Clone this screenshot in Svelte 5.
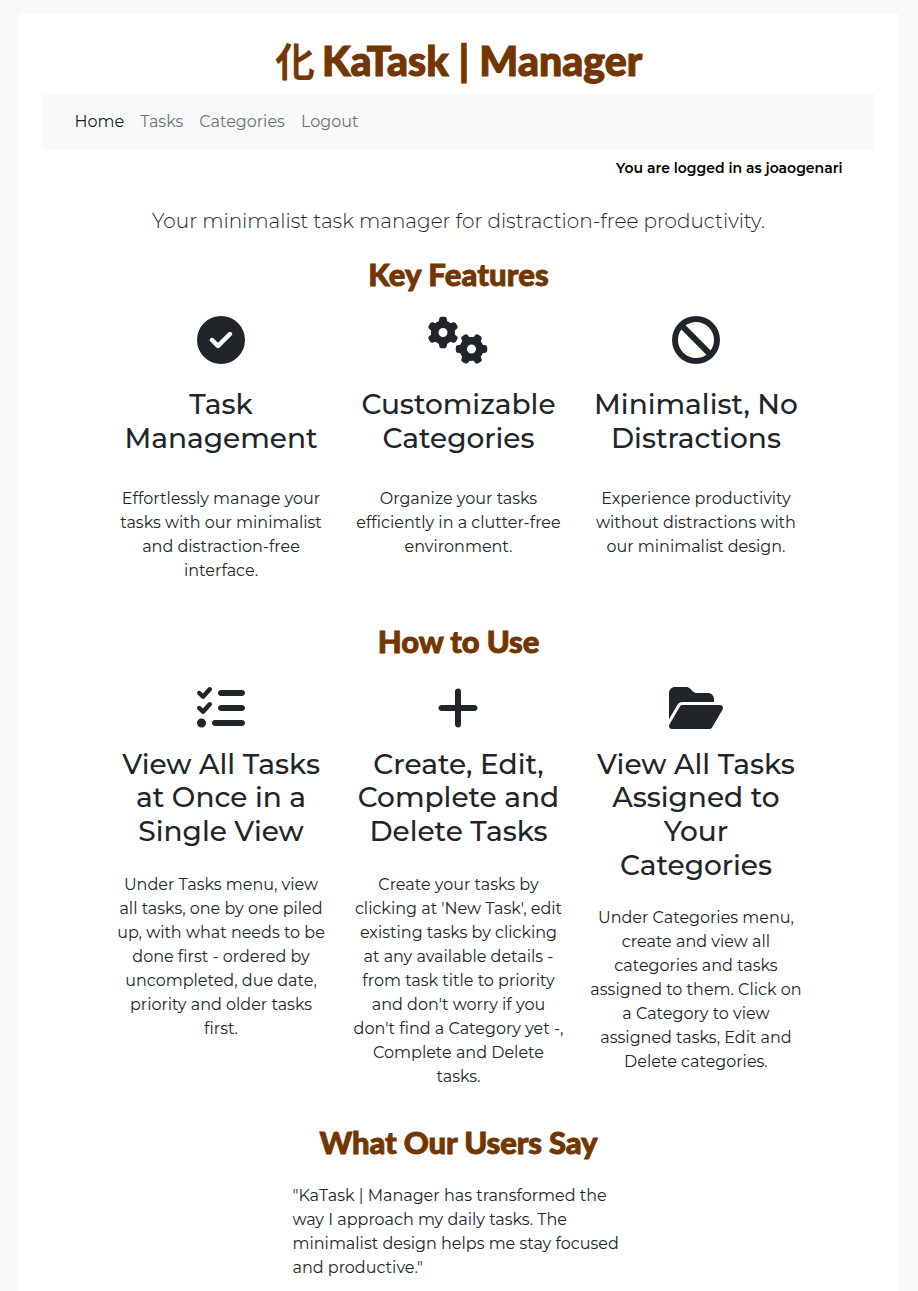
<script>
  const nav = ['Home', 'Tasks', 'Categories', 'Logout'];

  const icons = {
    check: { w: 512, d: 'M256 512A256 256 0 1 0 256 0a256 256 0 1 0 0 512zM369 209L241 337c-9.400 9.400-24.600 9.400-33.900 0l-64-64c-9.400-9.400-9.400-24.600 0-33.900s24.600-9.400 33.900 0l47 47L335 175c9.400-9.400 24.600-9.400 33.900 0s9.400 24.600 0 33.900z' },
    gears: { w: 640, d: 'M308.500 135.300c7.100-6.300 9.900-16.200 6.200-25c-2.300-5.300-4.800-10.500-7.600-15.500L304 89.400c-3-5-6.300-9.900-9.800-14.600c-5.700-7.600-15.700-10.100-24.700-7.100l-28.200 9.300c-10.700-8.800-23-16-36.200-20.900L199 27.100c-1.900-9.300-9.100-16.700-18.500-17.800C173.900 8.400 167.200 8 160.400 8h-.7c-6.800 0-13.500 .4-20.100 1.200c-9.400 1.100-16.600 8.600-18.500 17.800L115 56.100c-13.300 5-25.500 12.100-36.200 20.900L50.500 67.800c-9-3-19-.5-24.700 7.100c-3.500 4.700-6.800 9.600-9.900 14.600l-3 5.300c-2.800 5-5.300 10.200-7.600 15.600c-3.700 8.700-.9 18.600 6.200 25l22.200 19.800C32.600 161.900 32 168.900 32 176s.6 14.100 1.700 20.900L11.500 216.700c-7.100 6.300-9.900 16.200-6.200 25c2.300 5.300 4.800 10.500 7.600 15.600l3 5.200c3 5.100 6.300 9.900 9.900 14.600c5.700 7.600 15.700 10.100 24.700 7.100l28.200-9.300c10.700 8.800 23 16 36.200 20.900l6.100 29.100c1.900 9.300 9.100 16.700 18.500 17.800c6.700 .8 13.500 1.200 20.400 1.200s13.700-.4 20.400-1.200c9.400-1.100 16.600-8.600 18.500-17.800l6.100-29.100c13.300-5 25.500-12.100 36.200-20.900l28.200 9.300c9 3 19 .5 24.700-7.100c3.500-4.700 6.800-9.500 9.800-14.600l3.100-5.400c2.800-5 5.300-10.200 7.600-15.500c3.700-8.700 .9-18.600-6.200-25l-22.200-19.800c1.100-6.800 1.700-13.800 1.700-20.900s-.6-14.100-1.700-20.900l22.200-19.800zM112 176a48 48 0 1 1 96 0 48 48 0 1 1-96 0zM504.700 500.500c6.300 7.100 16.200 9.900 25 6.200c5.300-2.300 10.500-4.800 15.500-7.600l5.400-3.100c5-3 9.900-6.300 14.600-9.800c7.600-5.700 10.100-15.700 7.100-24.700l-9.300-28.200c8.800-10.700 16-23 20.900-36.200l29.100-6.100c9.300-1.900 16.700-9.100 17.800-18.500c.8-6.700 1.200-13.500 1.200-20.400s-.4-13.700-1.200-20.400c-1.100-9.400-8.600-16.600-17.800-18.500L583.900 307c-5-13.300-12.100-25.500-20.900-36.200l9.300-28.200c3-9 .5-19-7.100-24.700c-4.700-3.500-9.600-6.800-14.600-9.900l-5.300-3c-5-2.800-10.200-5.300-15.600-7.600c-8.700-3.700-18.600-.9-25 6.200l-19.800 22.200c-6.800-1.100-13.800-1.700-20.900-1.700s-14.100 .6-20.900 1.700l-19.800-22.200c-6.300-7.100-16.200-9.900-25-6.200c-5.300 2.300-10.500 4.800-15.600 7.600l-5.200 3c-5.100 3-9.900 6.300-14.600 9.900c-7.600 5.700-10.100 15.700-7.100 24.700l9.300 28.200c-8.800 10.700-16 23-20.900 36.200L315.100 313c-9.300 1.900-16.700 9.100-17.800 18.500c-.8 6.700-1.200 13.500-1.200 20.400s.4 13.700 1.200 20.400c1.100 9.400 8.600 16.600 17.800 18.500l29.100 6.100c5 13.300 12.100 25.500 20.900 36.200l-9.300 28.200c-3 9-.5 19 7.100 24.700c4.700 3.500 9.500 6.800 14.600 9.800l5.400 3.100c5 2.800 10.200 5.300 15.500 7.600c8.700 3.700 18.600 .9 25-6.200l19.800-22.200c6.800 1.100 13.800 1.700 20.900 1.700s14.100-.6 20.900-1.700l19.800 22.200zM464 304a48 48 0 1 1 0 96 48 48 0 1 1 0-96z' },
    ban: { w: 512, d: 'M367.200 412.500L99.500 144.800C77.100 176.100 64 214.500 64 256c0 106 86 192 192 192c41.500 0 79.900-13.100 111.200-35.500zm45.300-45.300C434.900 335.900 448 297.500 448 256c0-106-86-192-192-192c-41.500 0-79.900 13.100-111.200 35.500L412.500 367.200zM0 256a256 256 0 1 1 512 0A256 256 0 1 1 0 256z' },
    list: { w: 512, d: 'M152.100 38.200c9.900 8.900 10.700 24 1.800 33.900l-72 80c-4.400 4.900-10.600 7.800-17.200 7.900s-12.900-2.400-17.600-7L7 113C-2.300 103.600-2.300 88.400 7 79s24.600-9.400 33.900 0l22.100 22.100 55.100-61.200c8.900-9.900 24-10.700 33.900-1.800zm0 160c9.900 8.900 10.700 24 1.800 33.900l-72 80c-4.400 4.900-10.600 7.800-17.200 7.900s-12.900-2.400-17.600-7L7 273c-9.400-9.400-9.400-24.600 0-33.900s24.600-9.400 33.900 0l22.100 22.100 55.100-61.200c8.900-9.900 24-10.700 33.900-1.800zM224 96c0-17.700 14.300-32 32-32H480c17.700 0 32 14.300 32 32s-14.300 32-32 32H256c-17.700 0-32-14.300-32-32zm0 160c0-17.700 14.300-32 32-32H480c17.700 0 32 14.300 32 32s-14.300 32-32 32H256c-17.700 0-32-14.300-32-32zM160 416c0-17.700 14.300-32 32-32H480c17.700 0 32 14.300 32 32s-14.300 32-32 32H192c-17.700 0-32-14.300-32-32zM48 368a48 48 0 1 1 0 96 48 48 0 1 1 0-96z' },
    plus: { w: 448, d: 'M256 80c0-17.700-14.300-32-32-32s-32 14.300-32 32V224H48c-17.700 0-32 14.300-32 32s14.300 32 32 32H192V432c0 17.700 14.300 32 32 32s32-14.300 32-32V288H400c17.700 0 32-14.300 32-32s-14.300-32-32-32H256V80z' },
    folder: { w: 576, d: 'M88.700 223.800L0 375.800V96C0 60.700 28.700 32 64 32H181.500c17 0 33.300 6.700 45.300 18.700l26.500 26.500c12 12 28.300 18.700 45.300 18.700H416c35.300 0 64 28.700 64 64v32H144c-22.800 0-43.800 12.100-55.300 31.800zm27.600 16.100C122.100 230 132.600 224 144 224H544c11.500 0 22 6.100 27.700 16.100s5.700 22.200-.1 32.100l-112 192C453.900 474 443.400 480 432 480H32c-11.500 0-22-6.100-27.700-16.100s-5.700-22.200 .1-32.100l112-192z' }
  };

  const features = [
    { icon: 'check', title: 'Task Management', body: 'Effortlessly manage your tasks with our minimalist and distraction-free interface.' },
    { icon: 'gears', title: 'Customizable Categories', body: 'Organize your tasks efficiently in a clutter-free environment.' },
    { icon: 'ban', title: 'Minimalist, No Distractions', body: 'Experience productivity without distractions with our minimalist design.' }
  ];

  const steps = [
    { icon: 'list', title: 'View All Tasks at Once in a Single View', body: 'Under Tasks menu, view all tasks, one by one piled up, with what needs to be done first - ordered by uncompleted, due date, priority and older tasks first.' },
    { icon: 'plus', title: 'Create, Edit, Complete and Delete Tasks', body: "Create your tasks by clicking at 'New Task', edit existing tasks by clicking at any available details - from task title to priority and don't worry if you don't find a Category yet -, Complete and Delete tasks." },
    { icon: 'folder', title: 'View All Tasks Assigned to Your Categories', body: 'Under Categories menu, create and view all categories and tasks assigned to them. Click on a Category to view assigned tasks, Edit and Delete categories.' }
  ];
</script>

{#snippet cards(list)}
  <div class="row">
    {#each list as item}
      <article>
        <svg viewBox="0 0 {icons[item.icon].w} 512" width={icons[item.icon].w * 0.09375} height="48" aria-hidden="true"><path d={icons[item.icon].d} /></svg>
        <h3>{item.title}</h3>
        <p>{item.body}</p>
      </article>
    {/each}
  </div>
{/snippet}

<div class="page">
  <h1><span class="kanji">化</span> KaTask | Manager</h1>
  <nav>
    {#each nav as label, i}
      <a href="#top" class:active={i === 0}>{label}</a>
    {/each}
  </nav>
  <div class="user">You are logged in as joaogenari</div>
  <p class="lead">Your minimalist task manager for distraction-free productivity.</p>

  <section class="features">
    <h2 class="wide">Key Features</h2>
    {@render cards(features)}
  </section>
  <section class="steps">
    <h2>How to Use</h2>
    {@render cards(steps)}
  </section>
  <section class="say">
    <h2>What Our Users Say</h2>
    <blockquote>"KaTask | Manager has transformed the way I approach my daily tasks. The minimalist design helps me stay focused and productive."</blockquote>
  </section>
</div>

<style>
  :global(body) { background: #f8f9fb; overflow: hidden; }
  .page {
    box-sizing: border-box;
    width: 880px;
    height: 1320px;
    margin: 13px 0 0 19px;
    padding: 24px;
    border-radius: 4px;
    background: #fff;
    color: #212529;
    font: 400 16px/24px Montserrat, Inter, sans-serif;
  }
  h1, h2, h3, p, blockquote { margin: 0; }
  h1, h2 { color: #733600; font-family: Lato, "Noto Sans CJK JP", sans-serif; font-weight: 900; text-align: center; }
  h1 { height: 57px; font-size: 41px; line-height: 47px; letter-spacing: 0.07px; white-space: nowrap; -webkit-text-stroke: 1.1px #733600; }
  .kanji { font-family: "Noto Sans CJK JP", sans-serif; font-size: 39px; font-weight: 500; line-height: 1; margin-right: -2.500px; -webkit-text-stroke-width: 0.9px; }
  h2 { font-size: 31px; line-height: 36px; height: 38px; letter-spacing: -0.12px; -webkit-text-stroke: 0.9px #733600; }
  h2.wide { letter-spacing: 0.15px; }
  nav { display: flex; gap: 16px; height: 56px; box-sizing: border-box; padding-left: 31.5px; align-items: center; background: #f8f9fb; }
  nav a { color: #707173; text-decoration: none; }
  nav a.active { color: #191a1b; }
  .user { padding: 8px 32.5px 0 0; text-align: right; color: #000; font-size: 14px; font-weight: 600; line-height: 21px; }
  .lead { margin: 27px 1px 0 0; text-align: center; font-size: 20px; font-weight: 300; line-height: 30px; }
  section { width: 712.4px; margin: 0 0 0 59.3px; }
  .features { margin-top: 20px; height: 367px; }
  .steps { height: 501px; }
  .row { display: grid; grid-template-columns: repeat(3, 1fr); }
  article { padding: 0 12px; text-align: center; }
  svg { display: block; margin: 0 auto; fill: #212529; }
  h3 { font-size: 28px; font-weight: 500; line-height: 33.6px; }
  .features .row { padding-top: 22px; }
  .features h3 { margin: 24px 0 32px; }
  .steps .row { padding-top: 23px; }
  .steps h3 { margin: 15.800px 0 24.200px; }
  blockquote { width: 332px; margin: 22px auto 0; }
</style>
